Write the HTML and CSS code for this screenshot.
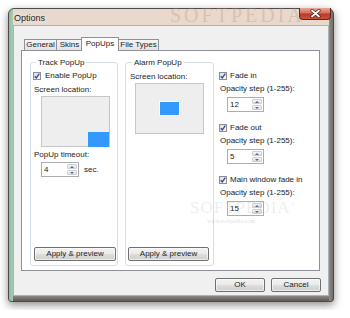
FILE: index.html
```html
<!DOCTYPE html>
<html lang="en">
<head>
  <meta charset="UTF-8" />
  <title>Options</title>
  <link rel="stylesheet" href="styles.css">
</head>
<body>

  <div class="window">
    <div class="titlebar">
      <span class="title">Options</span>
      <span class="close">
        <svg width="11" height="9" viewBox="0 0 11 9"><path d="M2 1.5 L9 7.5 M9 1.5 L2 7.5" stroke="#5a1a12" stroke-width="3.2" stroke-linecap="round"/><path d="M2 1.5 L9 7.5 M9 1.5 L2 7.5" stroke="#fff" stroke-width="1.8" stroke-linecap="round"/></svg>
      </span>
    </div>

    <div class="client">
      <div class="tabs">
        <span class="tab tab-general">General</span>
        <span class="tab tab-skins">Skins</span>
        <span class="tab tab-popups active">PopUps</span>
        <span class="tab tab-files">File Types</span>
      </div>

      <div class="panel">
        <fieldset class="group track">
          <legend>Track PopUp</legend>
          <label class="check"><span class="box"><svg width="6" height="6" viewBox="0 0 6 6"><path d="M0.8 3.2 L2.3 4.9 L5.3 0.6" fill="none" stroke="#2a4a9a" stroke-width="1.3"/></svg></span>Enable PopUp</label>
          <div class="caption">Screen location:</div>
          <div class="screen corner"><span class="spot"></span></div>
          <div class="caption timeout">PopUp timeout:</div>
          <div class="spin-row">
            <div class="spin wide"><span class="val">4</span><span class="arrows"><i class="up"></i><i class="dn"></i></span></div>
            <span class="unit">sec.</span>
          </div>
          <button class="btn apply">Apply &amp; preview</button>
        </fieldset>

        <fieldset class="group alarm">
          <legend>Alarm PopUp</legend>
          <div class="caption first">Screen location:</div>
          <div class="screen center"><span class="spot"></span></div>
          <button class="btn apply">Apply &amp; preview</button>
        </fieldset>

        <div class="fades">
          <div class="fade">
            <label class="check"><span class="box"><svg width="6" height="6" viewBox="0 0 6 6"><path d="M0.8 3.2 L2.3 4.9 L5.3 0.6" fill="none" stroke="#2a4a9a" stroke-width="1.3"/></svg></span>Fade in</label>
            <div class="caption">Opacity step (1-255):</div>
            <div class="spin"><span class="val">12</span><span class="arrows"><i class="up"></i><i class="dn"></i></span></div>
          </div>
          <div class="fade">
            <label class="check"><span class="box"><svg width="6" height="6" viewBox="0 0 6 6"><path d="M0.8 3.2 L2.3 4.9 L5.3 0.6" fill="none" stroke="#2a4a9a" stroke-width="1.3"/></svg></span>Fade out</label>
            <div class="caption">Opacity step (1-255):</div>
            <div class="spin"><span class="val">5</span><span class="arrows"><i class="up"></i><i class="dn"></i></span></div>
          </div>
          <div class="fade">
            <label class="check"><span class="box"><svg width="6" height="6" viewBox="0 0 6 6"><path d="M0.8 3.2 L2.3 4.9 L5.3 0.6" fill="none" stroke="#2a4a9a" stroke-width="1.3"/></svg></span>Main window fade in</label>
            <div class="caption">Opacity step (1-255):</div>
            <div class="spin"><span class="val">15</span><span class="arrows"><i class="up"></i><i class="dn"></i></span></div>
          </div>
        </div>
      </div>

      <div class="actions">
        <button class="btn">OK</button>
        <button class="btn">Cancel</button>
      </div>
    </div>
  </div>

  <!-- faint site watermarks over the shot -->
  <div class="mark mark-title">SOFTPEDIA</div>
  <div class="mark mark-body">SOFTPEDIA<sup>®</sup></div>
  <div class="mark mark-url">www.softpedia.com</div>

</body>
</html>
```

FILE: styles.css
```css
/* Reset and base */
* { margin: 0; padding: 0; box-sizing: border-box; }
body { background: #fff; padding: 8px; font-family: 'Liberation Sans', Arial, sans-serif; font-size: 8px; line-height: 10px; color: #222; }

/* Window frame */
.window {
  width: 326px; height: 294px;
  display: flex; flex-direction: column;
  border: 1px solid #4e4a47;
  border-radius: 6px 6px 3px 3px;
  background:
    linear-gradient(to right, #8fbaa3 0, #a9cbb8 4px, transparent 4px),
    linear-gradient(to left, #716a65 0, #948c86 4px, transparent 4px),
    linear-gradient(to top, #5f5a57 0, #8e8883 5px, transparent 5px),
    linear-gradient(#ead8cc, #e2d7d0 30%, #d3ccc7);
  box-shadow: 0 3px 8px rgba(0,0,0,0.45);
}
.titlebar { height: 16px; display: flex; justify-content: space-between; align-items: flex-start; }
.title { padding: 4px 0 0 5px; font-size: 9px; color: #1a1a1a; text-shadow: 0 0 4px #fff; position: relative; z-index: 1; }
.close {
  width: 32px; height: 12px; margin: -1px 2px 0 0;
  display: flex; align-items: center; justify-content: center;
  border: 1px solid #5d2519; border-top: none;
  border-radius: 0 0 4px 4px;
  background: linear-gradient(#e9a896, #d0705d 45%, #b9392a 55%, #c9523c);
  position: relative; z-index: 1;
}

/* Client area */
.client {
  flex: 1; margin: 0 4px 5px;
  background: #f0f0f0;
  border: 1px solid #a9b3bb;
  padding: 11px 8px 0 7px;
  display: flex; flex-direction: column;
}

/* Tabs */
.tabs { height: 13px; display: flex; align-items: flex-end; padding-left: 3px; position: relative; z-index: 1; }
.tab {
  height: 11px; line-height: 10px; text-align: center;
  border: 1px solid #8e9198; border-bottom: none;
  background: linear-gradient(#f5f5f5, #e3e3e3);
  margin-right: -1px;
}
.tab-general { width: 33px; }
.tab-skins { width: 27px; }
.tab-popups { width: 38px; }
.tab-files { width: 41px; }
.tab.active { height: 14px; margin: 0 -1px -1px -1px; background: #fff; line-height: 12px; position: relative; }

/* Panel */
.panel {
  height: 221px; background: #fff;
  border: 1px solid #8e9198;
  display: flex; padding: 7px 0 4px 8px;
}

/* Group boxes */
.group {
  display: flex; flex-direction: column;
  border: 1px solid #d5dfe5; border-radius: 3px;
  min-width: 0;
}
.group legend { line-height: 9px; padding: 0 2px; margin-left: 3px; color: #1e1e1e; }
.track { width: 88px; padding: 0 2px 4px 2px; }
.alarm { width: 89px; margin-left: 7px; padding: 0 3px 4px 3px; }

.check { display: flex; align-items: center; height: 10px; margin-top: 4px; }
.box {
  width: 8px; height: 8px; margin-right: 4px;
  border: 1px solid #8f8f8f;
  background: linear-gradient(135deg, #dcdcdc, #fafafa);
  display: flex; align-items: center; justify-content: center;
}
.caption { margin-top: 4px; padding-left: 1px; }
.caption.first { margin-top: 5px; }
.caption.timeout { margin-top: 3px; }

/* Screen location previews */
.screen {
  width: 69px; height: 51px; margin: 1px 0 0 8px;
  background: #eeeeee; border: 1px solid #c6c6c6;
  display: flex;
}
.alarm .screen { margin-left: 6px; }
.spot { width: 21px; height: 15px; background: #3399ff; }
.screen.corner { align-items: flex-end; justify-content: flex-end; }
.screen.corner .spot { margin: 0 0 -1px 0; }
.screen.center { align-items: center; justify-content: center; }
.screen.center .spot { border: 1px solid #fff; }

/* Spinners */
.spin-row { display: flex; align-items: center; margin: 2px 0 0 8px; }
.unit { margin-left: 5px; }
.spin {
  width: 37px; height: 15px; display: flex;
  background: #fff; border: 1px solid #abadb3;
}
.spin.wide { width: 38px; }
.val { flex: 1; padding-left: 2px; line-height: 13px; }
.arrows { width: 10px; margin: 1px; display: flex; flex-direction: column; gap: 1px; }
.arrows i {
  flex: 1; display: flex; align-items: center; justify-content: center;
  background: linear-gradient(#f6f6f6, #e0e2e6); border: 1px solid #ccd0d6; border-radius: 1px;
}
.arrows i::after { content: ''; border: 2px solid transparent; }
.arrows .up::after { border-bottom-color: #556b8f; border-top-width: 0; }
.arrows .dn::after { border-top-color: #556b8f; border-bottom-width: 0; }

/* Buttons */
.btn {
  height: 14px; font: inherit; font-size: 8px; color: #222;
  border: 1px solid #707070; border-radius: 2px;
  background: linear-gradient(#f2f2f2 0%, #ebebeb 48%, #dddddd 52%, #cfcfcf 100%);
  box-shadow: inset 0 0 0 1px rgba(255,255,255,0.6);
}
.apply { margin-top: auto; width: 82px; margin-left: 1px; }
.alarm .apply { width: 81px; margin-left: -1px; }

/* Right column */
.fades { flex: 1; margin-left: 4px; padding: 13px 0 0 1px; display: flex; flex-direction: column; }
.fade { margin-bottom: 11px; }
.fade .check { margin-top: 0; }
.fade .box { margin-right: 3px; }
.fade .caption { margin-top: 3px; }
.fade .spin { margin: 3px 0 0 8px; }

/* Dialog buttons */
.actions { display: flex; justify-content: flex-end; gap: 6px; margin: 7px -1px 0 0; }
.actions .btn { width: 50px; }

/* Watermarks */
.mark { position: absolute; pointer-events: none; font-family: 'Liberation Serif', serif; }
.mark-title { left: 170px; top: 6px; font-size: 20px; line-height: 18px; letter-spacing: 3px; color: rgba(170,135,115,0.3); }
.mark-body { left: 190px; top: 198px; font-size: 17px; line-height: 13px; letter-spacing: 1px; color: rgba(150,150,150,0.18); }
.mark-body sup { font-size: 6px; }
.mark-url { left: 207px; top: 218px; font-size: 6px; line-height: 7px; color: rgba(150,150,150,0.35); }
```
